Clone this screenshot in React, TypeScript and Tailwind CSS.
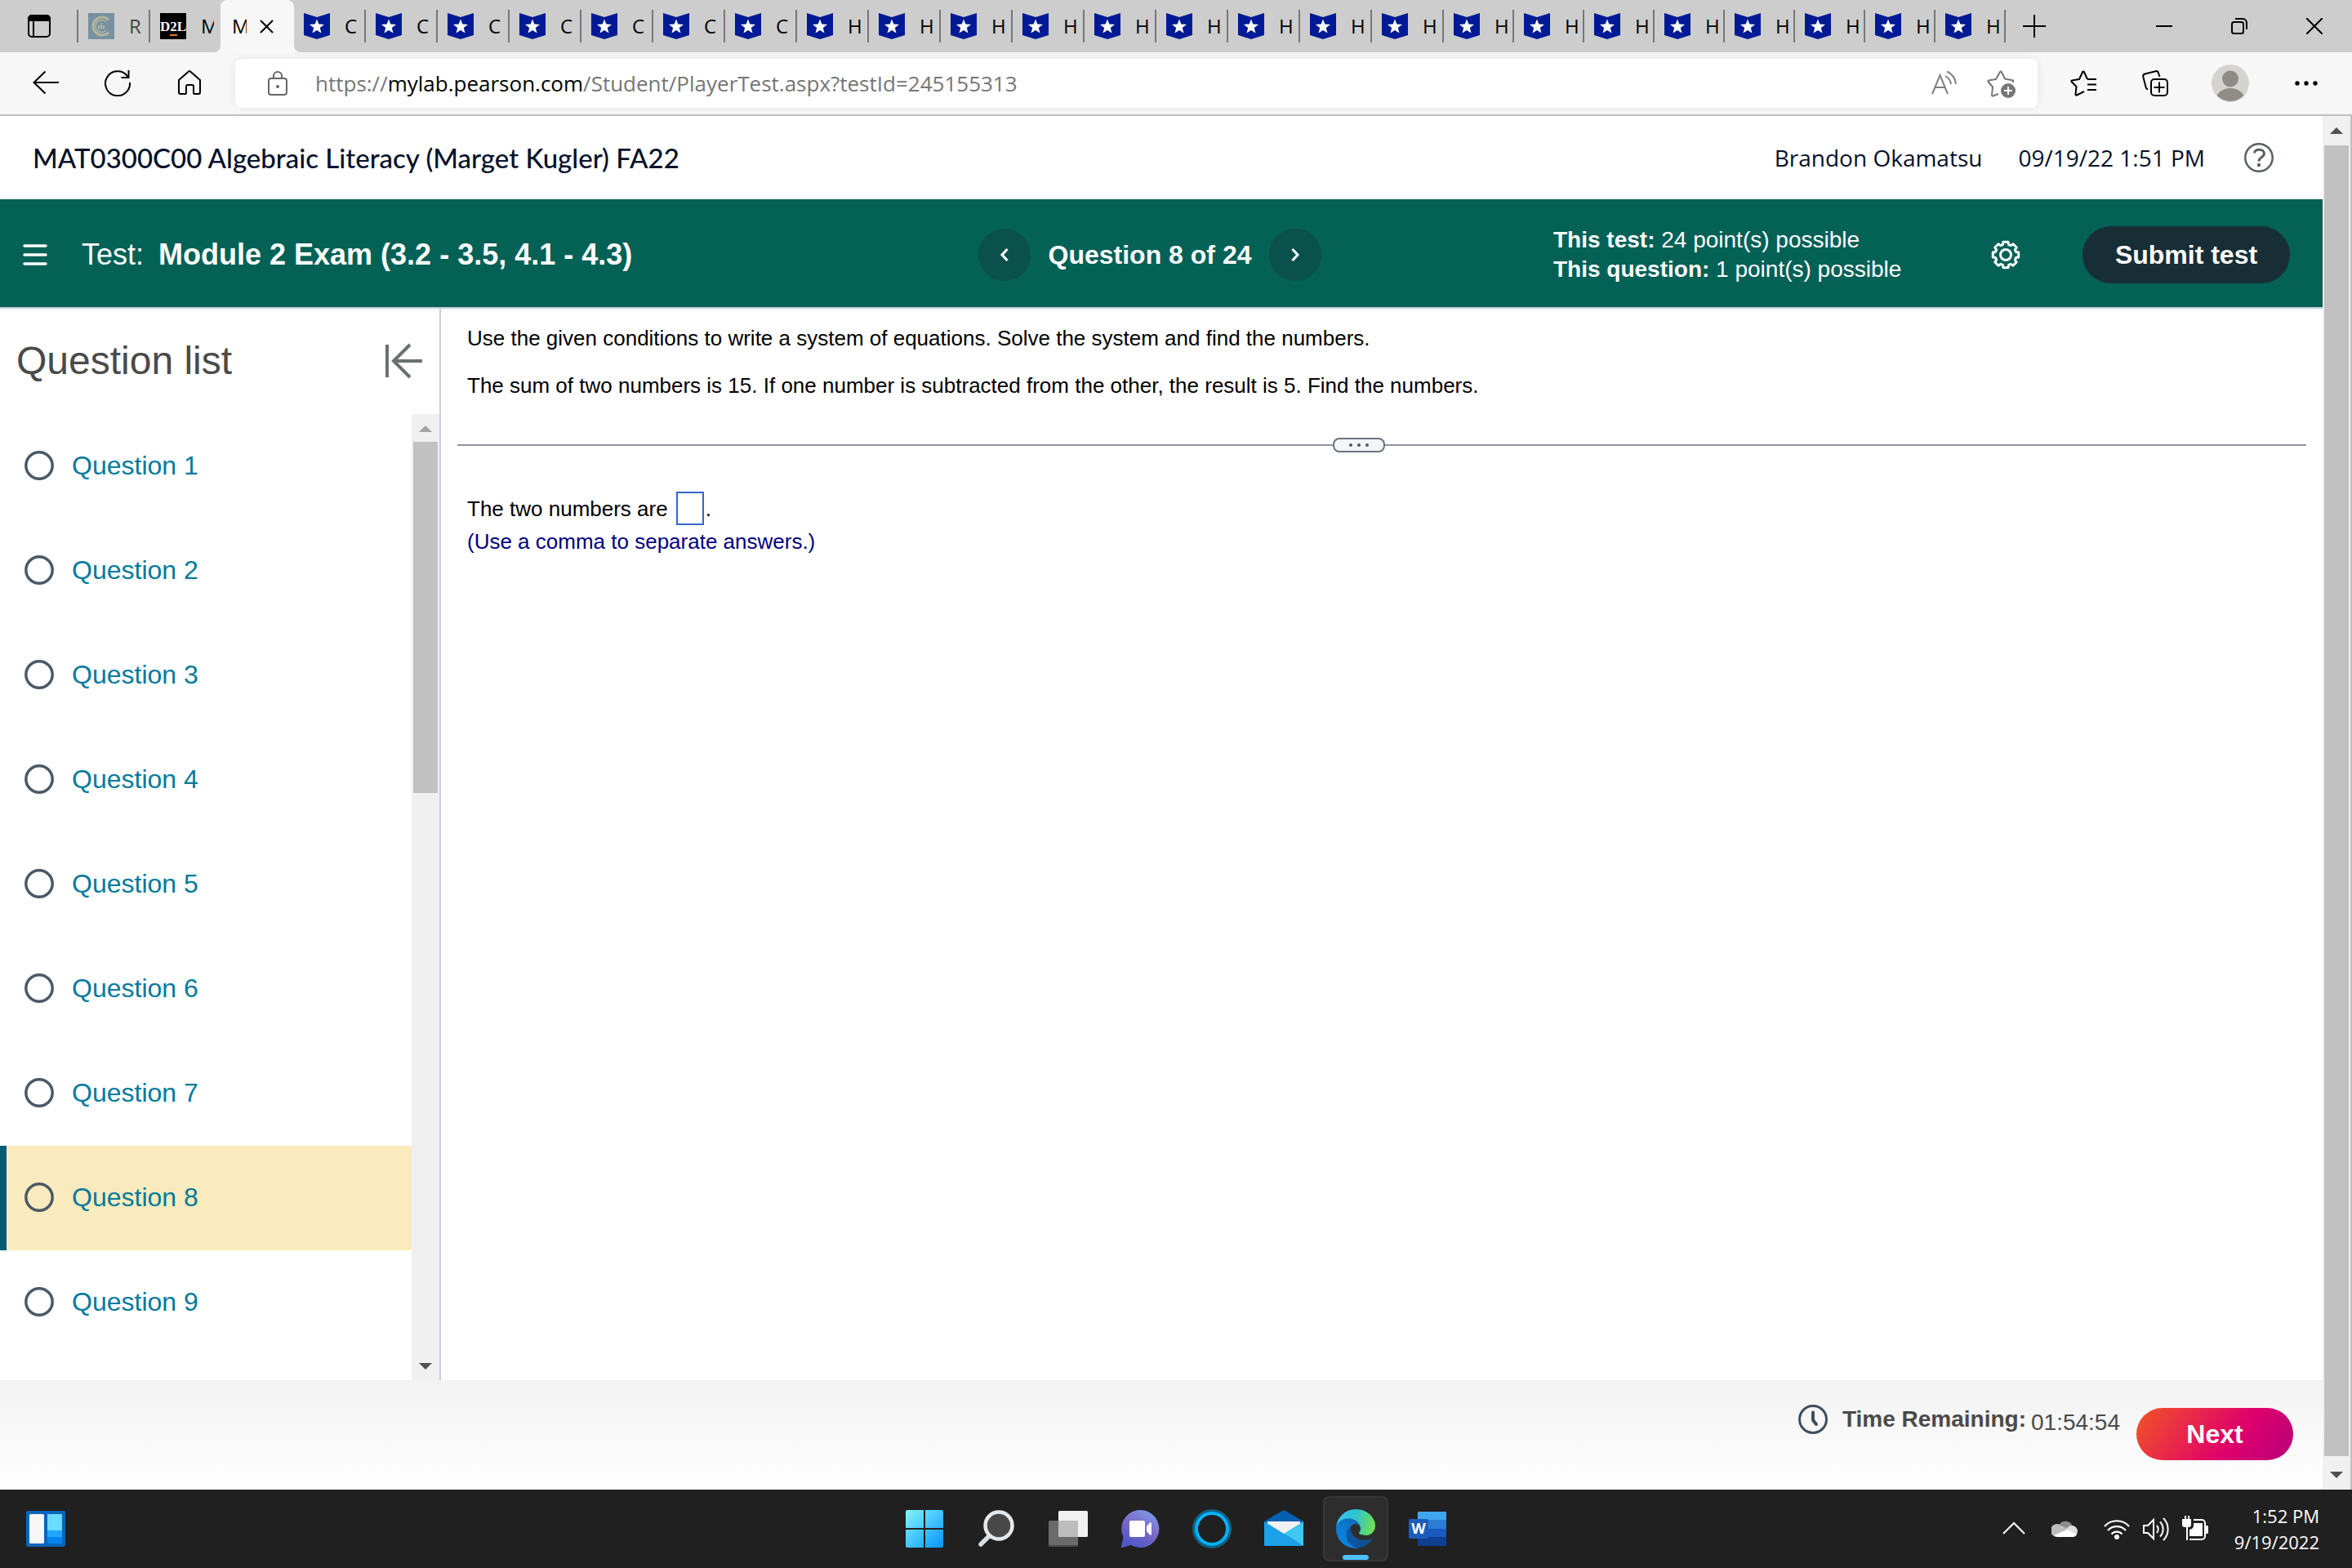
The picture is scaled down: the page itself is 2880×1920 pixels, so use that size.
import React from "react";

const courseTabs = Array.from({ length: 7 }, (_, i) => ({ id: `c${i}`, title: "Course Home" }));
const homeworkTabs = Array.from({ length: 17 }, (_, i) => ({ id: `h${i}`, title: "Homework" }));
const questions = [1, 2, 3, 4, 5, 6, 7, 8, 9];
const currentQuestion = 8;

// Eight-toothed cog outline around (18, 18)
function gearPath() {
  const points: string[] = [];
  for (let i = 0; i < 8; i++) {
    const a = (i * Math.PI) / 4;
    const steps: [number, number][] = [
      [-0.28, 13],
      [-0.19, 16],
      [0.19, 16],
      [0.28, 13],
    ];
    steps.forEach(([d, r]) => {
      points.push(`${(18 + r * Math.sin(a + d)).toFixed(2)} ${(18 - r * Math.cos(a + d)).toFixed(2)}`);
    });
  }
  return `M${points.join("L")}Z`;
}

function ShieldIcon() {
  return (
    <svg className="h-8 w-8 shrink-0" viewBox="0 0 32 32" aria-hidden>
      <path d="M0 0 16 5 32 0V27L16 32 0 27Z" fill="#001a96" />
      <path
        d="M16 7.5 18.3 13.6 25 13.9 19.8 18 21.5 24.5 16 20.9 10.5 24.5 12.2 18 7 13.9 13.7 13.6Z"
        fill="#fff"
      />
    </svg>
  );
}

function CollegeIcon() {
  return (
    <svg className="h-8 w-8 shrink-0" viewBox="0 0 32 32" aria-hidden>
      <rect width="32" height="32" fill="#7891a1" />
      <g fill="none" stroke="#b3b6a0">
        <path d="M25 8.5A11 11 0 1 0 25 23.5" strokeWidth="3" />
        <path d="M22 11A7.5 7.5 0 1 0 22 21" strokeWidth="1.5" />
        <path d="M13 20V15M16 20V12M19 20V15M12 17H20" strokeWidth="1.5" />
      </g>
    </svg>
  );
}

function D2LIcon() {
  return (
    <span className="flex h-8 w-8 shrink-0 items-center justify-center bg-black">
      <span className="font-['Liberation_Serif',serif] text-[17px] font-bold leading-none text-white">
        D<span className="border-b-2 border-[#e87722]">2</span>L
      </span>
    </span>
  );
}

type TabProps = {
  title: string;
  icon: React.ReactNode;
  separator?: boolean;
  narrow?: boolean;
  muted?: boolean;
};

function Tab({ title, icon, separator = true, narrow, muted }: TabProps) {
  return (
    <button
      className={[
        "flex h-16 shrink-0 items-center pl-3",
        narrow ? "w-[86px]" : "w-[88px]",
        separator ? "" : "pr-2",
        muted ? "text-[#444]" : "text-black",
      ].join(" ")}
      title={title}
    >
      {icon}
      <span className="ml-[18px] min-w-0 flex-1 overflow-hidden whitespace-nowrap text-left text-2xl">
        {title.charAt(0)}
      </span>
      {separator && <span className="ml-1.5 h-10 w-0.5 bg-[#777]" />}
    </button>
  );
}

function TabStrip() {
  return (
    <div className="flex h-16 items-center bg-[#cdcdcd]">
      <button className="flex h-16 w-24 items-center justify-between pl-[34px]" aria-label="Tab actions">
        <svg className="h-7 w-7" viewBox="0 0 28 28" fill="none" stroke="#000" strokeWidth="2">
          <rect x="1" y="1" width="26" height="26" rx="4" />
          <path d="M1 7V5a4 4 0 0 1 4-4H23a4 4 0 0 1 4 4V7Z" fill="#000" />
          <path d="M7 7V27" />
        </svg>
        <span className="h-10 w-0.5 bg-[#777]" />
      </button>
      <Tab title="R" icon={<CollegeIcon />} muted />
      <Tab title="M" icon={<D2LIcon />} separator={false} narrow />

      <div className="relative flex h-16 w-[90px] shrink-0 items-center rounded-t-lg bg-[#f7f7f7] pl-3.5">
        <svg className="absolute -left-2 bottom-0 h-2 w-2" viewBox="0 0 8 8" aria-hidden>
          <path d="M8 0V8H0A8 8 0 0 0 8 0Z" fill="#f7f7f7" />
        </svg>
        <svg className="absolute -right-2 bottom-0 h-2 w-2" viewBox="0 0 8 8" aria-hidden>
          <path d="M0 0V8H8A8 8 0 0 1 0 0Z" fill="#f7f7f7" />
        </svg>
        <span className="w-[18px] overflow-hidden text-2xl">M</span>
        <button className="ml-3.5" aria-label="Close tab">
          <svg className="h-5 w-5" viewBox="0 0 20 20" stroke="#000" strokeWidth="2">
            <path d="M3 3 18 18M18 3 3 18" />
          </svg>
        </button>
      </div>

      {courseTabs.map((tab) => (
        <Tab key={tab.id} title={tab.title} icon={<ShieldIcon />} />
      ))}
      {homeworkTabs.map((tab, i) => (
        <Tab key={tab.id} title={tab.title} icon={<ShieldIcon />} narrow={i > 8} />
      ))}

      <button className="ml-5 p-px" aria-label="New tab">
        <svg className="h-7 w-7" viewBox="0 0 28 28" stroke="#000" strokeWidth="2">
          <path d="M14 0V28M0 14H28" />
        </svg>
      </button>

      <div className="ml-auto flex items-center gap-[72px] pr-9">
        <button aria-label="Minimize">
          <svg className="h-5 w-5" viewBox="0 0 20 20" stroke="#000" strokeWidth="2">
            <path d="M0 10H20" />
          </svg>
        </button>
        <button aria-label="Restore">
          <svg className="h-5 w-5" viewBox="0 0 20 20" fill="none" stroke="#000" strokeWidth="2">
            <rect x="1" y="5" width="14" height="14" rx="2.5" />
            <path d="M5 1H14a5 5 0 0 1 5 5V14" />
          </svg>
        </button>
        <button aria-label="Close">
          <svg className="h-5 w-5" viewBox="0 0 20 20" stroke="#000" strokeWidth="2">
            <path d="M0 0 20 20M20 0 0 20" />
          </svg>
        </button>
      </div>
    </div>
  );
}

function Toolbar() {
  return (
    <div className="flex h-[78px] items-center border-b-2 border-[#bfbfbf] bg-[#f7f7f7] pl-10 pr-[42px]">
      <button aria-label="Back">
        <svg className="h-8 w-8" viewBox="0 0 32 32" fill="none" stroke="#000" strokeWidth="2">
          <path d="M32 15H1M15.500 1.500 1.500 15 15.500 28.500" />
        </svg>
      </button>
      <button className="ml-14" aria-label="Refresh">
        <svg className="h-8 w-8" viewBox="0 0 32 32" fill="none" stroke="#000" strokeWidth="2">
          <path d="M31 15A15 15 0 1 1 27 6L29 9M29.500 0V9H20.500" />
        </svg>
      </button>
      <button className="ml-14" aria-label="Home">
        <svg className="h-8 w-8" viewBox="0 0 32 32" fill="none" stroke="#000" strokeWidth="2" strokeLinejoin="round">
          <path d="M3 12 15 1.500a1.500 1.500 0 0 1 2 0L29 12V27a2 2 0 0 1-2 2H22a1 1 0 0 1-1-1V20a2 2 0 0 0-2-2H14a2 2 0 0 0-2 2V28a1 1 0 0 1-1 1H5a2 2 0 0 1-2-2Z" />
        </svg>
      </button>

      <div className="ml-10 flex h-15 flex-1 items-center rounded-lg bg-white pl-10 pr-[26px] shadow-[0_0_12px_rgba(0,0,0,0.08)]">
        <svg className="h-[30px] w-6 shrink-0" viewBox="0 0 24 30" fill="none" stroke="#666" strokeWidth="2" aria-hidden>
          <rect x="1" y="9" width="22" height="20" rx="3" />
          <path d="M7 9V6a5 5 0 0 1 10 0V9" />
          <circle cx="12" cy="19" r="2" fill="#666" stroke="none" />
        </svg>
        <div className="ml-[34px] flex-1 whitespace-nowrap text-[26px] text-[#767676]" role="textbox" aria-label="Address">
          https://<span className="text-black">mylab.pearson.com</span>/Student/PlayerTest.aspx?testId=245155313
        </div>
        <button aria-label="Read aloud">
          <svg className="h-8 w-8" viewBox="0 0 32 32" fill="none" stroke="#808080" strokeWidth="2">
            <path d="M1 29 10.500 6 20 29M4.500 21H16.500M17 7A14 14 0 0 1 24 17M19 1.500A19 19 0 0 1 30 17" />
          </svg>
        </button>
        <button className="ml-9" aria-label="Add to favorites">
          <svg className="h-9 w-9" viewBox="0 0 36 36" fill="none" stroke="#767676" strokeWidth="2">
            <path
              d="M14 31 7.500 33.500a1 1 0 0 1-1.500-1L7 22.500 1.500 16a1 1 0 0 1 .6-1.500L11 13 16 4a1 1 0 0 1 1.800 0L22 12.500 32 14.500V17"
              strokeLinejoin="round"
            />
            <circle cx="26" cy="27" r="9" fill="#767676" stroke="none" />
            <path d="M26 22V32M21 27H31" stroke="#fff" />
          </svg>
        </button>
      </div>

      <button className="ml-10" aria-label="Favorites">
        <svg className="h-8 w-8" viewBox="0 0 32 32" fill="none" stroke="#000" strokeWidth="2" strokeLinejoin="round">
          <path d="M17 26 8 30.500a1 1 0 0 1-1.500-1L7.500 20 1.500 14a1 1 0 0 1 .6-1.500L11 11 15.200 2a1 1 0 0 1 1.700 0L21 11M21 11H32M21 17.500H32M21 24H32" />
        </svg>
      </button>
      <button className="ml-14" aria-label="Collections">
        <svg className="h-8 w-8" viewBox="0 0 32 32" fill="none" stroke="#000" strokeWidth="2">
          <rect x="11" y="11" width="20" height="20" rx="4" />
          <path d="M21 14.500V27.500M14.500 21H27.500M21.500 8 20 3.500A3 3 0 0 0 16.500 1.200L3.500 4.500A3 3 0 0 0 1.300 8L4.500 20.500A4 4 0 0 0 7 23.500" />
        </svg>
      </button>
      <button className="ml-[53px]" aria-label="Profile">
        <svg className="h-[46px] w-[46px]" viewBox="0 0 46 46">
          <clipPath id="avatar">
            <circle cx="23" cy="23" r="22" />
          </clipPath>
          <circle cx="23" cy="23" r="23" fill="#d5d3cf" />
          <g fill="#8f8b87" clipPath="url(#avatar)">
            <circle cx="23" cy="17.500" r="10" />
            <ellipse cx="23" cy="42" rx="17" ry="13" />
          </g>
        </svg>
      </button>
      <button className="ml-14" aria-label="Settings and more">
        <svg className="h-7 w-7" viewBox="0 0 28 28" fill="#000">
          <circle cx="3" cy="14" r="2.700" />
          <circle cx="14" cy="14" r="2.700" />
          <circle cx="25" cy="14" r="2.700" />
        </svg>
      </button>
    </div>
  );
}

function CourseHeader() {
  return (
    <header className="flex h-[102px] items-center bg-white pl-10 pr-15 text-[#05112a]">
      <h1 className="flex-1 font-['Lato',sans-serif] text-[33px] font-medium leading-10">
        MAT0300C00 Algebraic Literacy (Marget Kugler) FA22
      </h1>
      <span className="text-[28px] leading-10">Brandon Okamatsu</span>
      <span className="ml-11 text-[28px] leading-10">09/19/22 1:51 PM</span>
      <button className="ml-12" aria-label="Help">
        <svg className="h-9 w-9" viewBox="0 0 36 36" fill="none" stroke="#5a6062" strokeWidth="2.500">
          <circle cx="18" cy="18" r="16.700" />
          <path d="M12.500 12.500C12.500 6.500 24.500 7 24.500 13 24.500 18 18 17 18 22.500" strokeWidth="3" />
          <circle cx="18" cy="27" r="2.200" fill="#5a6062" stroke="none" />
        </svg>
      </button>
    </header>
  );
}

function TestBar() {
  return (
    <div className="flex h-[134px] items-center border-b-2 border-[#c7cfd9] bg-[#036156] pl-7 pr-10 pt-1 text-white">
      <div className="flex flex-1 items-center">
        <button aria-label="Menu">
          <svg className="h-7 w-[30px]" viewBox="0 0 30 28" stroke="#fff" strokeWidth="3.500" strokeLinecap="round">
            <path d="M2 3H28M2 14H28M2 25H28" />
          </svg>
        </button>
        <h2 className="ml-[42px] whitespace-nowrap text-4xl">
          Test: <strong className="ml-2 font-bold">Module 2 Exam (3.2 - 3.5, 4.1 - 4.3)</strong>
        </h2>
      </div>

      <nav className="mr-4 flex items-center gap-[22px]">
        <button className="flex h-16 w-16 items-center justify-center rounded-full bg-[#0a504c]" aria-label="Previous question">
          <svg className="h-4 w-4" viewBox="0 0 16 16" fill="none" stroke="#fff" strokeWidth="3">
            <path d="M11.500 1 5 8 11.500 15" />
          </svg>
        </button>
        <span className="whitespace-nowrap text-[32px] font-bold leading-10">Question 8 of 24</span>
        <button className="flex h-16 w-16 items-center justify-center rounded-full bg-[#0a504c]" aria-label="Next question">
          <svg className="h-4 w-4" viewBox="0 0 16 16" fill="none" stroke="#fff" strokeWidth="3">
            <path d="M4.500 1 11 8 4.500 15" />
          </svg>
        </button>
      </nav>

      <div className="flex flex-1 items-center justify-end">
        <div className="w-[536px] whitespace-nowrap text-[28px] leading-9">
          <p>
            <strong>This test:</strong> 24 point(s) possible
          </p>
          <p>
            <strong>This question:</strong> 1 point(s) possible
          </p>
        </div>
        <button aria-label="Settings">
          <svg className="h-9 w-9" viewBox="0 0 36 36" fill="none" stroke="#fff" strokeWidth="3" strokeLinejoin="round">
            <path d={gearPath()} />
            <circle cx="18" cy="18" r="6.500" />
          </svg>
        </button>
        <button className="ml-[76px] h-[70px] w-[254px] rounded-full bg-[#182e36] text-[32px] font-bold">
          Submit test
        </button>
      </div>
    </div>
  );
}

function QuestionList() {
  return (
    <aside className="flex w-[540px] shrink-0 flex-col border-r-2 border-[#c9cee0] bg-white">
      <div className="flex h-[129px] items-center justify-between pb-0.5 pl-5 pr-[21px]">
        <h2 className="text-5xl text-[#4a4a4a]">Question list</h2>
        <button aria-label="Collapse question list">
          <svg className="h-11 w-[46px]" viewBox="0 0 46 44" fill="none" stroke="#6a7070" strokeWidth="4">
            <path d="M3 2V42M46 22H11M31 2 11 22 31 42" />
          </svg>
        </button>
      </div>
      <div className="flex flex-1">
        <ul className="flex-1">
          {questions.map((n) => (
            <li
              key={n}
              className={n === currentQuestion ? "border-l-8 border-[#005b77] bg-[#f9ebbd]" : "border-l-8 border-transparent"}
            >
              <a href={`#question-${n}`} className="flex h-32 items-center gap-[22px] pb-0.5 pl-[22px] text-[32px] text-[#047a9c]">
                <svg className="h-9 w-9" viewBox="0 0 36 36" fill="none" stroke="#4b5966" strokeWidth="3.500" aria-hidden>
                  <circle cx="18" cy="18" r="16.200" />
                </svg>
                Question {n}
              </a>
            </li>
          ))}
        </ul>
        <div className="flex w-[34px] flex-col items-center bg-[#f0f0f0]">
          <svg className="h-[34px] w-4 shrink-0" viewBox="0 0 16 34" fill="#a3a3a3" aria-hidden>
            <path d="M0 22 8 14 16 22Z" />
          </svg>
          <span className="h-[430px] w-[30px] bg-[#c1c1c1]" />
          <svg className="mt-auto h-[34px] w-4 shrink-0" viewBox="0 0 16 34" fill="#505050" aria-hidden>
            <path d="M0 13 8 21 16 13Z" />
          </svg>
        </div>
      </div>
    </aside>
  );
}

function QuestionPanel() {
  return (
    <main className="min-w-0 flex-1 bg-white pl-5 pr-5 pt-5 text-[26px] leading-8 text-black">
      <p className="pl-3">Use the given conditions to write a system of equations. Solve the system and find the numbers.</p>
      <p className="mt-[26px] pl-3">
        The sum of two numbers is 15. If one number is subtracted from the other, the result is 5. Find the numbers.
      </p>
      <div className="mt-12 flex items-center">
        <span className="h-0.5 w-[1072px] bg-[#8e94a9]" />
        <button
          className="flex h-[18px] w-16 items-center justify-center gap-1.5 rounded-lg border-2 border-[#6a7382] bg-[#f4f5f7]"
          aria-label="Resize panes"
        >
          <span className="h-1 w-1 rounded-full bg-[#555]" />
          <span className="h-1 w-1 rounded-full bg-[#555]" />
          <span className="h-1 w-1 rounded-full bg-[#555]" />
        </button>
        <span className="h-0.5 flex-1 bg-[#8e94a9]" />
      </div>
      <div className="mt-12 flex items-center pl-3">
        <label htmlFor="answer">The two numbers are</label>
        <input id="answer" type="text" className="ml-2.5 mr-0.5 h-[41px] w-[34px] border-2 border-[#3366cc] outline-none" />
        <span>.</span>
      </div>
      <p className="mt-1 pl-3 text-[#00007f]">(Use a comma to separate answers.)</p>
    </main>
  );
}

function FooterBar() {
  return (
    <footer className="flex h-[134px] items-start justify-end bg-gradient-to-b from-[#f2f2f2] to-white pr-9 text-[28px] leading-8 text-[#4a4a4a]">
      <svg className="mt-[30px] h-9 w-9" viewBox="0 0 36 36" fill="none" stroke="#3d4f5e" aria-hidden>
        <circle cx="18" cy="18" r="16.500" strokeWidth="3" />
        <path d="M18 9.500V19L22 24" strokeWidth="4" strokeLinecap="round" strokeLinejoin="round" />
      </svg>
      <strong className="ml-[18px] mt-8">Time Remaining:</strong>
      <span className="ml-1.5 mt-9">01:54:54</span>
      <button className="ml-5 mt-[34px] h-16 w-48 rounded-full bg-[linear-gradient(125deg,#f04e2b_5%,#df006b_62%,#b7007a_100%)] text-[32px] font-bold text-white">
        Next
      </button>
    </footer>
  );
}

function PageScrollbar() {
  return (
    <div className="flex w-9 shrink-0 flex-col items-center border-r-2 border-[#bfbfbf] bg-[#f0f0f0]">
      <svg className="h-9 w-4 shrink-0" viewBox="0 0 16 36" fill="#505050" aria-hidden>
        <path d="M0 22 8 14 16 22Z" />
      </svg>
      <span className="w-[30px] flex-1 bg-[#c1c1c1]" />
      <svg className="h-[41px] w-4 shrink-0" viewBox="0 0 16 41" fill="#505050" aria-hidden>
        <path d="M0 19 8 27 16 19Z" />
      </svg>
    </div>
  );
}

function StartIcon() {
  return (
    <svg className="h-[46px] w-[46px]" viewBox="0 0 46 46">
      <linearGradient id="win" x1="0" y1="0" x2="46" y2="46" gradientUnits="userSpaceOnUse">
        <stop stopColor="#82f7ff" />
        <stop offset="1" stopColor="#0594ff" />
      </linearGradient>
      <path
        fill="url(#win)"
        d="M2 0H22V22H0V2A2 2 0 0 1 2 0ZM24 0H44A2 2 0 0 1 46 2V22H24ZM0 24H22V46H2A2 2 0 0 1 0 44ZM24 24H46V44A2 2 0 0 1 44 46H24Z"
      />
    </svg>
  );
}

function SearchIcon() {
  return (
    <svg className="h-12 w-12" viewBox="0 0 48 48">
      <path d="M17 31 5 43" stroke="#d9dde0" strokeWidth="5.500" strokeLinecap="round" />
      <circle cx="27" cy="20" r="16.500" fill="#484848" stroke="#e6e9eb" strokeWidth="4.500" />
    </svg>
  );
}

function TaskViewIcon() {
  return (
    <svg className="h-12 w-12" viewBox="0 0 48 48">
      <rect x="12" y="2" width="36" height="32" rx="1.500" fill="#f1f1f1" />
      <rect x="0" y="14" width="36" height="32" rx="1.500" fill="#6a6a6a" />
      <rect x="12" y="14" width="24" height="20" fill="#bdbdbd" />
      <rect x="0" y="44" width="36" height="2" rx="1" fill="#4a4a4a" />
    </svg>
  );
}

function ChatIcon() {
  return (
    <svg className="h-12 w-12" viewBox="0 0 48 48">
      <linearGradient id="chat" x1="36" y1="2" x2="14" y2="44" gradientUnits="userSpaceOnUse">
        <stop stopColor="#7f98ea" />
        <stop offset="0.500" stopColor="#7d68c4" />
        <stop offset="1" stopColor="#5059c9" />
      </linearGradient>
      <path d="M24 1A23 23 0 1 1 13 44L2 47C1 47 .6 46 1 45L3.500 34A23 23 0 0 1 24 1Z" fill="url(#chat)" />
      <rect x="11" y="14" width="19" height="20" rx="2" fill="#fff" />
      <path d="M32 21 36 16.500H38V31.500H36L32 27Z" fill="#fff" />
    </svg>
  );
}

function CortanaIcon() {
  return (
    <svg className="h-12 w-12" viewBox="0 0 48 48" fill="none">
      <circle cx="24" cy="24" r="21" stroke="#135f7c" strokeWidth="6" />
      <circle cx="24" cy="24" r="19" stroke="#00b2ff" strokeWidth="4" />
    </svg>
  );
}

function MailIcon() {
  return (
    <svg className="h-12 w-12" viewBox="0 0 48 48">
      <path d="M0 15 22 2A4 4 0 0 1 26 2L48 15V20H0Z" fill="#0560b4" />
      <path d="M4 15H44V30H4Z" fill="#f1f1f1" />
      <path d="M0 15 24 30 48 45H1A1 1 0 0 1 0 44Z" fill="#1ca0e8" />
      <path d="M48 15 24 30 48 45Z" fill="#3bc8f2" />
    </svg>
  );
}

function EdgeIcon() {
  return (
    <svg className="h-12 w-12" viewBox="4.600 4.900 256 256">
      <linearGradient id="edge-a" x1="63" y1="178" x2="241" y2="178" gradientUnits="userSpaceOnUse">
        <stop stopColor="#0c59a4" />
        <stop offset="1" stopColor="#114a8b" />
      </linearGradient>
      <linearGradient id="edge-b" x1="157" y1="100" x2="46" y2="222" gradientUnits="userSpaceOnUse">
        <stop stopColor="#0f6cbd" />
        <stop offset="1" stopColor="#0a84e0" />
      </linearGradient>
      <linearGradient id="edge-c" x1="20" y1="70" x2="250" y2="120" gradientUnits="userSpaceOnUse">
        <stop stopColor="#35c1f1" />
        <stop offset="0.450" stopColor="#2ec3d0" />
        <stop offset="1" stopColor="#6ee052" />
      </linearGradient>
      <path
        fill="url(#edge-a)"
        d="M235.680 195.460a93.730 93.730 0 0 1-10.540 4.710 101.870 101.870 0 0 1-35.900 6.460c-47.320 0-88.540-32.550-88.540-74.320A31.480 31.480 0 0 1 117.130 105c-42.800 1.800-53.800 46.400-53.800 72.530 0 73.880 68.090 81.370 82.760 81.370 7.910 0 19.840-2.300 27-4.560l1.310-.44a128.340 128.340 0 0 0 66.600-52.800 4 4 0 0 0-5.320-5.640z"
      />
      <path
        fill="url(#edge-b)"
        d="M110.340 246.340A79.200 79.200 0 0 1 87.600 225a80.720 80.720 0 0 1 29.530-120c3.120-1.470 8.450-4.130 15.540-4a32.350 32.350 0 0 1 25.690 13 31.880 31.880 0 0 1 6.360 18.660c0-.21 24.460-79.600-80-79.600-43.900 0-80 41.660-80 78.210a130.150 130.150 0 0 0 12.110 56 128 128 0 0 0 156.380 67.110 75.550 75.550 0 0 1-62.780-8z"
      />
      <path
        fill="url(#edge-c)"
        d="M156.940 153.780c-.81 1.050-3.300 2.500-3.300 5.660 0 2.610 1.700 5.120 4.720 7.230 14.380 10 41.490 8.680 41.560 8.680a59.560 59.560 0 0 0 30.270-8.350 61.380 61.380 0 0 0 30.430-52.880c.26-22.410-8-37.310-11.340-43.910C228.090 28.760 182.350 4.920 132.610 4.920a128 128 0 0 0-128 126.200c.48-36.540 36.800-66.050 80-66.050 3.500 0 23.460.34 42 10.070 16.340 8.580 24.900 18.940 30.850 29.210 6.180 10.670 7.280 24.150 7.280 29.520s-2.740 13.330-7.800 19.910z"
      />
    </svg>
  );
}

function WordIcon() {
  return (
    <svg className="h-12 w-12" viewBox="0 0 48 48">
      <path d="M13 3H46A1 1 0 0 1 47 4V13H12V4A1 1 0 0 1 13 3Z" fill="#41a5ee" />
      <path d="M12 13H47V24H12Z" fill="#2b7cd3" />
      <path d="M12 24H47V34H12Z" fill="#185abd" />
      <path d="M12 34H47V44A1 1 0 0 1 46 45H13A1 1 0 0 1 12 44Z" fill="#103f91" />
      <rect x="1" y="12" width="24" height="24" rx="2" fill="#1b5cbe" />
      <text x="13" y="30" fill="#fff" fontFamily="Open Sans, sans-serif" fontSize="18" fontWeight="700" textAnchor="middle">
        W
      </text>
    </svg>
  );
}

const apps = [
  { name: "Start", icon: <StartIcon /> },
  { name: "Search", icon: <SearchIcon /> },
  { name: "Task view", icon: <TaskViewIcon /> },
  { name: "Chat", icon: <ChatIcon /> },
  { name: "Cortana", icon: <CortanaIcon /> },
  { name: "Mail", icon: <MailIcon /> },
  { name: "Microsoft Edge", icon: <EdgeIcon />, active: true },
  { name: "Word", icon: <WordIcon /> },
];

function Taskbar() {
  return (
    <div className="grid h-24 grid-cols-[1fr_auto_1fr] items-center bg-[#202020] text-white">
      <button className="ml-8 w-12" aria-label="Widgets">
        <svg className="h-11 w-12" viewBox="0 0 48 44">
          <rect width="48" height="44" rx="2" fill="#0a65b8" />
          <rect x="4" y="4" width="18" height="36" rx="1.500" fill="#f7f7f7" />
          <path d="M26 4H44V24H26Z" fill="#69dbff" />
          <path d="M26 24H44V32H26Z" fill="#1fa7ff" />
          <path d="M26 32H44V40H26Z" fill="#0385ee" />
        </svg>
      </button>

      <div className="flex gap-2">
        {apps.map(({ name, icon, active }) => (
          <button
            key={name}
            aria-label={name}
            className={[
              "relative flex h-20 w-20 items-center justify-center",
              active ? "rounded-lg border-2 border-[#383838] bg-[#2d2d2d]" : "",
            ].join(" ")}
          >
            {icon}
            {active && <span className="absolute bottom-0 h-1.5 w-8 rounded-full bg-[#4cc2ff]" />}
          </button>
        ))}
      </div>

      <div className="flex items-center justify-end pr-10">
        <button aria-label="Show hidden icons">
          <svg className="h-7 w-7" viewBox="0 0 28 28" fill="none" stroke="#fff" strokeWidth="2">
            <path d="M1 20 14 7 27 20" />
          </svg>
        </button>
        <svg className="ml-8 h-8 w-8" viewBox="0 0 32 32" aria-hidden>
          <path d="M9 12A9 9 0 0 1 26 14L16 20Z" fill="#8c8c8c" />
          <path d="M8 26A8 8 0 1 1 12 12L22 17 8 26Z" fill="#bdbdbd" />
          <path d="M18 18A7 7 0 1 1 25 26Z" fill="#dedede" />
          <path d="M3 24 19 17 31 23A6 6 0 0 1 26 26H8A8 8 0 0 1 3 24Z" fill="#fff" />
        </svg>
        <svg className="ml-8 h-8 w-8" viewBox="0 0 32 32" fill="none" stroke="#fff" strokeWidth="2.200" aria-hidden>
          <path d="M1 13A20 20 0 0 1 31 13M5 18A15 15 0 0 1 27 18M9.500 22.500A9 9 0 0 1 22.500 22.500" />
          <circle cx="16" cy="26" r="3" fill="#fff" stroke="none" />
        </svg>
        <svg className="ml-4 h-9 w-8" viewBox="0 0 32 36" fill="none" stroke="#fff" strokeWidth="2" aria-hidden>
          <path d="M1 14V23H6L13 30V7L6 14ZM17 14A7 7 0 0 1 17 23M21 9.500A13 13 0 0 1 21 27.500M25 5A19 19 0 0 1 25 32" />
        </svg>
        <svg className="ml-4 h-8 w-8" viewBox="0 0 32 32" aria-hidden>
          <path d="M3 0H5V4H7V0H9V4H11V11A3 3 0 0 1 8 14H7V30H5V14H3A3 3 0 0 1 0 11V4H3Z" fill="#fff" />
          <path d="M14 5H24A4 4 0 0 1 28 9V25A4 4 0 0 1 24 29H9" fill="none" stroke="#fff" strokeWidth="2" />
          <path d="M14 9H25V25H9V17A5 5 0 0 0 14 12ZM29 12H31Q32 12 32 14V20Q32 22 31 22H29Z" fill="#fff" />
        </svg>
        <div className="ml-8 text-right text-[22px] leading-8">
          <p>1:52 PM</p>
          <p>9/19/2022</p>
        </div>
      </div>
    </div>
  );
}

export default function App() {
  return (
    <div className="flex min-h-screen flex-col overflow-hidden bg-white font-['Open_Sans',sans-serif]">
      <TabStrip />
      <Toolbar />
      <div className="flex flex-1">
        <div className="flex min-w-0 flex-1 flex-col">
          <CourseHeader />
          <div className="flex flex-1 flex-col font-['Liberation_Sans',sans-serif]">
            <TestBar />
            <div className="flex flex-1">
              <QuestionList />
              <QuestionPanel />
            </div>
            <FooterBar />
          </div>
        </div>
        <PageScrollbar />
      </div>
      <Taskbar />
    </div>
  );
}
